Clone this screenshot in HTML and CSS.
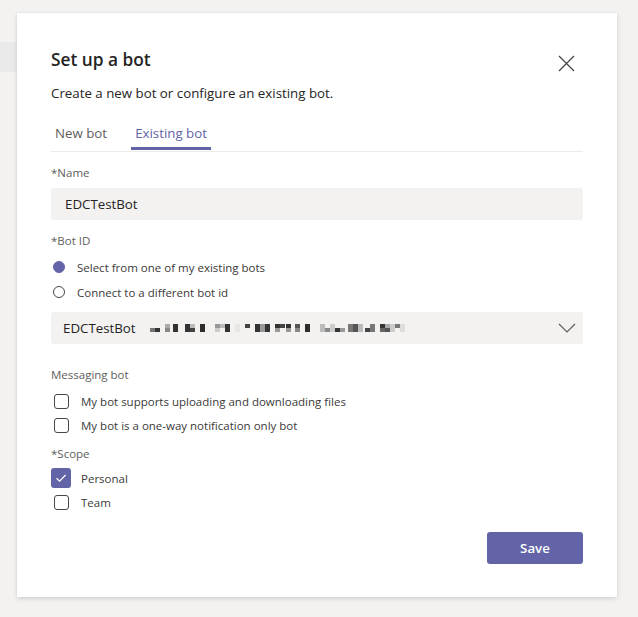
FILE: index.html
```html
<!DOCTYPE html>
<html lang="en">
<head>
<meta charset="utf-8">
<title>Set up a bot</title>
<link rel="stylesheet" href="styles.css">
</head>
<body>
<div class="dialog">
  <div class="header">
    <h1 class="title">Set up a bot</h1>
    <button class="close" aria-label="Close">
      <svg width="17" height="17" viewBox="0 0 17 17"><path d="M1 1 L16 16 M16 1 L1 16" stroke="#484644" stroke-width="1.3" fill="none"/></svg>
    </button>
  </div>
  <p class="subtitle">Create a new bot or configure an existing bot.</p>
  <div class="tabs">
    <div class="tab">New bot</div>
    <div class="tab active">Existing bot</div>
  </div>

  <div class="label label-first">*Name</div>
  <div class="input">EDCTestBot</div>

  <div class="label label-gap">*Bot ID</div>
  <div class="options options-radio">
    <div class="option"><span class="slot radio-slot"><span class="radio checked"></span></span><span>Select from one of my existing bots</span></div>
    <div class="option"><span class="slot radio-slot"><span class="radio"></span></span><span>Connect to a different bot id</span></div>
  </div>

  <div class="dropdown">
    <span class="dd-text">EDCTestBot</span>
    <svg class="pixels" width="260" height="8" viewBox="0 0 260 8">
      <rect x="0" y="4" width="5" height="4" fill="#777"/>
      <rect x="5" y="4" width="5" height="4" fill="#333"/>
      <rect x="15" y="0" width="5" height="4" fill="#aaa"/>
      <rect x="15" y="4" width="5" height="4" fill="#888"/>
      <rect x="23" y="0" width="5" height="8" fill="#333"/>
      <rect x="35" y="0" width="5" height="8" fill="#333"/>
      <rect x="40" y="0" width="5" height="4" fill="#bbb"/>
      <rect x="40" y="4" width="5" height="4" fill="#444"/>
      <rect x="50" y="0" width="5" height="8" fill="#2d2d2d"/>
      <rect x="65" y="0" width="5" height="4" fill="#999"/>
      <rect x="65" y="4" width="5" height="4" fill="#ccc"/>
      <rect x="70" y="0" width="5" height="4" fill="#bbb"/>
      <rect x="75" y="0" width="5" height="8" fill="#333"/>
      <rect x="85" y="0" width="5" height="8" fill="#e6e6e6"/>
      <rect x="95" y="0" width="5" height="4" fill="#444"/>
      <rect x="105" y="0" width="5" height="8" fill="#333"/>
      <rect x="110" y="0" width="5" height="8" fill="#999"/>
      <rect x="115" y="0" width="5" height="8" fill="#333"/>
      <rect x="125" y="0" width="5" height="4" fill="#333"/>
      <rect x="125" y="4" width="5" height="4" fill="#999"/>
      <rect x="130" y="0" width="5" height="4" fill="#444"/>
      <rect x="136" y="0" width="5" height="4" fill="#333"/>
      <rect x="136" y="4" width="5" height="4" fill="#999"/>
      <rect x="145" y="0" width="5" height="4" fill="#555"/>
      <rect x="145" y="4" width="5" height="4" fill="#888"/>
      <rect x="155" y="0" width="5" height="8" fill="#2d2d2d"/>
      <rect x="170" y="0" width="5" height="8" fill="#bbb"/>
      <rect x="175" y="4" width="5" height="4" fill="#888"/>
      <rect x="180" y="0" width="5" height="8" fill="#ccc"/>
      <rect x="185" y="4" width="5" height="4" fill="#333"/>
      <rect x="190" y="4" width="5" height="4" fill="#999"/>
      <rect x="198" y="0" width="5" height="8" fill="#777"/>
      <rect x="203" y="0" width="5" height="8" fill="#555"/>
      <rect x="208" y="0" width="5" height="8" fill="#bbb"/>
      <rect x="215" y="4" width="5" height="4" fill="#444"/>
      <rect x="220" y="0" width="5" height="8" fill="#777"/>
      <rect x="230" y="0" width="5" height="4" fill="#333"/>
      <rect x="230" y="4" width="5" height="4" fill="#666"/>
      <rect x="235" y="0" width="5" height="4" fill="#aaa"/>
      <rect x="235" y="4" width="5" height="4" fill="#555"/>
      <rect x="240" y="0" width="5" height="8" fill="#ccc"/>
      <rect x="245" y="0" width="5" height="4" fill="#777"/>
      <rect x="250" y="0" width="5" height="8" fill="#ddd"/>
    </svg>
    <svg class="chevron" width="18" height="10" viewBox="0 0 18 10"><path d="M1 1 L9 9 L17 1" stroke="#605e5c" stroke-width="1.2" fill="none"/></svg>
  </div>

  <div class="label label-section">Messaging bot</div>
  <div class="options">
    <div class="option"><span class="slot"><span class="checkbox"></span></span><span>My bot supports uploading and downloading files</span></div>
    <div class="option"><span class="slot"><span class="checkbox"></span></span><span>My bot is a one-way notification only bot</span></div>
  </div>

  <div class="label label-scope">*Scope</div>
  <div class="options options-scope">
    <div class="option"><span class="slot"><span class="checkbox checked"><svg width="20" height="20" viewBox="0 0 20 20"><path d="M5.5 10.2 L8.6 13.2 L14.6 7" stroke="#fff" stroke-width="1.2" fill="none"/></svg></span></span><span>Personal</span></div>
    <div class="option"><span class="slot"><span class="checkbox"></span></span><span>Team</span></div>
  </div>

  <div class="footer">
    <button class="save">Save</button>
  </div>
</div>
</body>
</html>
```
FILE: styles.css
```css
* { box-sizing: border-box; }
html, body { margin: 0; padding: 0; }
body {
  width: 638px;
  height: 617px;
  overflow: hidden;
  background: linear-gradient(#ebeaea, #ebeaea) 0 42px / 17px 30px no-repeat, #f3f2f1;
  font-family: "Open Sans", "Noto Sans", sans-serif;
  color: #252423;
  padding: 13px 0 0 17px;
}
.dialog {
  width: 600px;
  background: #fff;
  box-shadow: 0 2px 5px rgba(0,0,0,0.12), 0 0 2px rgba(0,0,0,0.06);
  padding: 35px 34px 33px 34px;
  display: flex;
  flex-direction: column;
}
.header {
  display: flex;
  justify-content: space-between;
  align-items: flex-start;
  height: 24px;
}
.title {
  margin: 0;
  font-size: 17.3px;
  line-height: 24px;
  font-weight: 600;
  color: #252423;
}
.close {
  border: 0;
  background: none;
  padding: 0;
  margin: 7px 8px 0 0;
  width: 17px;
  height: 17px;
  display: block;
}
.close svg { display: block; }
.subtitle {
  margin: 11px 0 0;
  font-size: 13.3px;
  line-height: 20px;
  color: #252423;
}
.tabs {
  margin-top: 14px;
  display: flex;
  gap: 20px;
  border-bottom: 1px solid #edebe9;
}
.tab {
  font-size: 13.3px;
  line-height: 20px;
  padding: 6px 4px 4px;
  margin-bottom: 1px;
  color: #605e5c;
  border-bottom: 3px solid transparent;
}
.tab.active {
  color: #6264a7;
  border-bottom-color: #6264a7;
}
.label {
  font-size: 11.5px;
  line-height: 16px;
  color: #605e5c;
}
.label-first { margin-top: 13px; }
.input {
  margin-top: 7px;
  height: 32px;
  background: #f3f2f1;
  border-radius: 3px;
  padding: 0 14px;
  font-size: 13.3px;
  line-height: 32px;
  color: #252423;
}
.label-gap { margin-top: 13px; }
.options {
  margin-top: 6px;
  display: flex;
  flex-direction: column;
}
.options-radio { gap: 1px; }
.option {
  display: flex;
  align-items: center;
  height: 24px;
  font-size: 11.5px;
  color: #3b3a39;
}
.slot {
  width: 20px;
  display: flex;
  justify-content: center;
  align-items: center;
  margin-right: 10px;
}
.radio-slot {
  width: 16px;
}
.radio {
  width: 12px;
  height: 12px;
  border-radius: 50%;
  border: 1px solid #484644;
}
.radio.checked {
  background: #6264a7;
  border-color: #6264a7;
}
.checkbox {
  width: 15px;
  height: 15px;
  border: 1px solid #484644;
  border-radius: 3px;
  display: block;
}
.checkbox.checked {
  width: 20px;
  height: 20px;
  border: 0;
  background: #6264a7;
  border-radius: 3px;
}
.checkbox svg { display: block; }
.dropdown {
  margin-top: 8px;
  height: 32px;
  background: #f3f2f1;
  border-radius: 3px;
  padding: 0 7px 0 12px;
  display: flex;
  align-items: center;
  font-size: 13.3px;
  color: #252423;
}
.dd-text { line-height: 32px; }
.pixels { margin-left: 14px; display: block; }
.chevron { margin-left: auto; display: block; }
.label-section { margin-top: 23px; }
.label-scope { margin-top: 9px; }
.options-scope { margin-top: 4px; }
.footer {
  margin-top: 18px;
  display: flex;
  justify-content: flex-end;
}
.save {
  width: 96px;
  height: 32px;
  border: 0;
  border-radius: 3px;
  background: #6264a7;
  color: #fff;
  font-family: inherit;
  font-size: 13.3px;
  font-weight: 600;
  padding: 0;
}
```
